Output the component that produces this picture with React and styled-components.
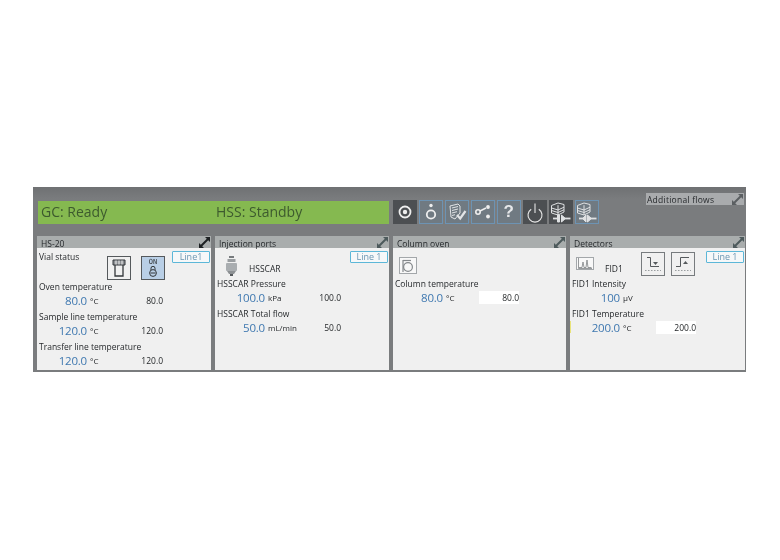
import styled, { createGlobalStyle } from "styled-components";

const GlobalStyle = createGlobalStyle`
  html, body {
    margin: 0;
    padding: 0;
    background: #ffffff;
  }
  body {
    font-family: "Open Sans", "Noto Sans", sans-serif;
    color: #26292c;
  }
`;

function ExpandIcon({ color = "#4d5a5c" }) {
  return (
    <svg width="11" height="11" viewBox="0 0 11 11" fill={color}>
      <path d="M6 0H11V5L9.2 3.2L3.2 9.2L5 11H0V6L1.8 7.8L7.8 1.8Z" />
    </svg>
  );
}

function TargetIcon() {
  return (
    <svg width="18" height="18" viewBox="0 0 18 18" fill="none" stroke="#eeeeee">
      <circle cx="9" cy="9" r="5.5" strokeWidth="1.8" />
      <circle cx="9" cy="9" r="2.2" fill="#eeeeee" stroke="none" />
    </svg>
  );
}

function InjectIcon() {
  return (
    <svg width="18" height="20" viewBox="0 0 18 20" fill="none" stroke="#eeeeee">
      <circle cx="9" cy="3.5" r="1.7" fill="#eeeeee" stroke="none" />
      <circle cx="9" cy="12.5" r="4.2" strokeWidth="1.8" />
    </svg>
  );
}

function BatchIcon() {
  return (
    <svg width="20" height="20" viewBox="0 0 20 20" fill="none" stroke="#e2e4e6" strokeWidth="1">
      <path d="M3 4L11 2L13 4V11L8 17L4 15Z" />
      <path d="M5 6L11 4.5M5 8.5L11 7M5 11L10 9.7M5 13.5L8 12.7" />
      <path d="M10 13L13.2 16.5L18.5 9" strokeWidth="2.2" />
    </svg>
  );
}

function NodesIcon() {
  return (
    <svg width="18" height="16" viewBox="0 0 18 16" fill="#eeeeee" stroke="#eeeeee">
      <circle cx="4" cy="8" r="2.2" fill="none" strokeWidth="1.6" />
      <path d="M6 7L12 4" strokeWidth="1.5" />
      <circle cx="14" cy="3" r="1.9" stroke="none" />
      <circle cx="14" cy="12.5" r="1.9" stroke="none" />
    </svg>
  );
}

function HelpIcon() {
  return <HelpMark>?</HelpMark>;
}

function PowerIcon() {
  return (
    <svg width="20" height="21" viewBox="0 0 20 21" fill="none" stroke="#e8e8e8" strokeWidth="1.1">
      <path d="M6.2 7.2A7 7 0 1 0 13.8 7.2" />
      <path d="M10 1.5V11" />
    </svg>
  );
}

function PlugStackIcon({ open }) {
  return (
    <svg width="21" height="21" viewBox="0 0 21 21" fill="none" stroke="#dfe1e3" strokeWidth="1">
      <path d="M1.5 3.5L8 1L14 2.5V10L8 13L1.5 11Z" />
      <path d="M1.5 6L8 8L14 5.2M1.5 8.5L8 10.5L14 7.7M8 3.2V13" />
      <path d="M3 16.5H7.5" strokeWidth="1.8" />
      <path d={open ? "M10 13V20L6.5 16.5Z" : "M7.5 13V20H9.5V13Z"} fill="#dfe1e3" />
      <path d="M11.5 13V20L15.5 16.5Z" fill="#dfe1e3" />
      <path d="M15 16.5H20.5" strokeWidth="1.8" />
    </svg>
  );
}

function UnplugIcon() {
  return <PlugStackIcon open />;
}

function VialIcon() {
  return (
    <svg width="16" height="18" viewBox="0 0 16 18" fill="none" stroke="#33373a">
      <path d="M2 1H14V6H2Z" fill="#8d9094" />
      <path d="M5 1.5V5.5M8 1.5V5.5M11 1.5V5.5" stroke="#f2f2f2" />
      <path d="M4 6V17H12V6" strokeWidth="1.3" />
    </svg>
  );
}

function LockIcon() {
  return (
    <svg width="12" height="11" viewBox="0 0 12 11" fill="none" stroke="#33373a">
      <path d="M4 4V2.3A2 2 0 0 1 8 2.3V4" />
      <circle cx="6" cy="7" r="3.4" />
      <path d="M3.5 7H8.5" />
    </svg>
  );
}

function InjectorIcon() {
  return (
    <svg width="13" height="20" viewBox="0 0 13 20">
      <rect x="4" y="0" width="5" height="2" fill="#777b7e" />
      <rect x="2.5" y="3" width="8" height="3" fill="#9a9ea1" />
      <rect x="1" y="7" width="11" height="8" rx="1" fill="#a9adb0" />
      <path d="M2 15H11L9 18H4Z" fill="#8c9093" />
      <rect x="5" y="18" width="3" height="2" fill="#55595c" />
    </svg>
  );
}

function OvenIcon() {
  return (
    <svg width="14" height="14" viewBox="0 0 14 14" fill="none" stroke="#85898c" strokeWidth="1.2">
      <path d="M2 1V13" />
      <circle cx="7" cy="8" r="4.4" />
      <path d="M2 1.5H10" />
    </svg>
  );
}

function PeakIcon() {
  return (
    <svg width="14" height="11" viewBox="0 0 14 11" fill="none" stroke="#7d8184" strokeWidth="0.8">
      <path d="M0.5 0V10.5H14" />
      <path d="M1 9.5H4L5 4L6 9.5H8L9 2L10 9.5H13.5" />
    </svg>
  );
}

function StepDownIcon() {
  return (
    <svg width="18" height="16" viewBox="0 0 18 16" fill="none" stroke="#55595c">
      <path d="M3 1.5H6.5V10.5H15" />
      <path d="M9 6H14L11.5 9Z" fill="#55595c" stroke="none" />
      <path d="M1 14.5H17" strokeDasharray="1.5 1.5" stroke="#9a9ea1" />
    </svg>
  );
}

function StepUpIcon() {
  return (
    <svg width="18" height="16" viewBox="0 0 18 16" fill="none" stroke="#55595c">
      <path d="M2 10.5H6.5V1.5H15" />
      <path d="M9 8H14L11.5 5Z" fill="#55595c" stroke="none" />
      <path d="M1 14.5H17" strokeDasharray="1.5 1.5" stroke="#9a9ea1" />
    </svg>
  );
}

const tools = [
  { key: "target", Icon: TargetIcon, dark: true },
  { key: "inject", Icon: InjectIcon },
  { key: "batch", Icon: BatchIcon },
  { key: "nodes", Icon: NodesIcon },
  { key: "help", Icon: HelpIcon },
  { key: "power", Icon: PowerIcon, dark: true },
  { key: "plug", Icon: PlugStackIcon, dark: true },
  { key: "unplug", Icon: UnplugIcon },
];

function Reading({ value, unit, setpoint, editable, warn }) {
  return (
    <ValueRow>
      <Value $warn={warn}>{value}</Value>
      <Unit>{unit}</Unit>
      <Setpoint $editable={editable}>{setpoint}</Setpoint>
    </ValueRow>
  );
}

export default function App() {
  return (
    <>
      <GlobalStyle />
      <Console>
        <TopBar>
          <StatusBar>
            <StatusText $width={175}>GC: Ready</StatusText>
            <StatusText>HSS: Standby</StatusText>
          </StatusBar>
          <ToolBar>
            {tools.map(({ key, Icon, dark }) => (
              <BarButton key={key} $dark={dark}>
                <Icon />
              </BarButton>
            ))}
          </ToolBar>
          <FlowsTab>
            Additional flows
            <ExpandIcon color="#5b5f62" />
          </FlowsTab>
        </TopBar>
        <Panels>
          <Panel>
            <PanelHead>
              <span>HS-20</span>
              <ExpandIcon color="#1d2123" />
            </PanelHead>
            <TopRow $height={33}>
              <Caption $width={70} $top={3}>Vial status</Caption>
              <ToolButton>
                <VialIcon />
              </ToolButton>
              <ToolButton $active $gap={10}>
                <OnMark>ON</OnMark>
                <LockIcon />
              </ToolButton>
              <LineBadge>Line1</LineBadge>
            </TopRow>
            <Group>
              <Label>Oven temperature</Label>
              <Reading value="80.0" unit="°C" setpoint="80.0" />
            </Group>
            <Group>
              <Label>Sample line temperature</Label>
              <Reading value="120.0" unit="°C" setpoint="120.0" />
            </Group>
            <Group>
              <Label>Transfer line temperature</Label>
              <Reading value="120.0" unit="°C" setpoint="120.0" />
            </Group>
          </Panel>

          <Panel>
            <PanelHead>
              <span>Injection ports</span>
              <ExpandIcon />
            </PanelHead>
            <TopRow $height={30}>
              <IconSlot $left={10} $width={22}>
                <InjectorIcon />
              </IconSlot>
              <Caption $top={15}>HSSCAR</Caption>
              <LineBadge>Line 1</LineBadge>
            </TopRow>
            <Group>
              <Label>HSSCAR Pressure</Label>
              <Reading value="100.0" unit="kPa" setpoint="100.0" />
            </Group>
            <Group>
              <Label>HSSCAR Total flow</Label>
              <Reading value="50.0" unit="mL/min" setpoint="50.0" />
            </Group>
          </Panel>

          <Panel>
            <PanelHead>
              <span>Column oven</span>
              <ExpandIcon />
            </PanelHead>
            <TopRow $height={30}>
              <IconSlot $left={6} $boxed>
                <OvenIcon />
              </IconSlot>
            </TopRow>
            <Group>
              <Label>Column temperature</Label>
              <Reading value="80.0" unit="°C" setpoint="80.0" editable />
            </Group>
          </Panel>

          <Panel>
            <PanelHead>
              <span>Detectors</span>
              <ExpandIcon />
            </PanelHead>
            <TopRow $height={30}>
              <IconSlot $left={6} $boxed $short>
                <PeakIcon />
              </IconSlot>
              <Caption $width={47} $top={15} $left={11}>FID1</Caption>
              <ToolButton $raised>
                <StepDownIcon />
              </ToolButton>
              <ToolButton $raised $gap={6}>
                <StepUpIcon />
              </ToolButton>
              <LineBadge>Line 1</LineBadge>
            </TopRow>
            <Group>
              <Label>FID1 Intensity</Label>
              <Reading value="100" unit="µV" />
            </Group>
            <Group>
              <Label>FID1 Temperature</Label>
              <Reading value="200.0" unit="°C" setpoint="200.0" editable warn />
            </Group>
          </Panel>
        </Panels>
      </Console>
    </>
  );
}

const Console = styled.div`
  width: 713px;
  height: 185px;
  margin: 187px 0 0 33px;
  background: linear-gradient(#6f7173, #7a7c7e 12px);
  box-sizing: border-box;
  filter: blur(0.3px);
`;
const TopBar = styled.div`
  display: flex;
  align-items: flex-start;
  height: 49px;
  padding: 0 2px 0 5px;
  box-sizing: border-box;
`;
const StatusBar = styled.div`
  display: flex;
  align-items: center;
  width: 351px;
  height: 23px;
  margin-top: 14px;
  padding: 0 0 2px 3px;
  box-sizing: border-box;
  background: #85b950;
`;
const StatusText = styled.span`
  width: ${(props) => (props.$width ? `${props.$width}px` : "auto")};
  font-size: 14px;
  color: #3d5a2e;
  white-space: nowrap;
`;
const ToolBar = styled.div`
  display: flex;
  gap: 2.5px;
  margin: 13px 0 0 4px;
`;
const BarButton = styled.div`
  display: flex;
  align-items: center;
  justify-content: center;
  width: 23.5px;
  height: 24px;
  box-sizing: border-box;
  background: ${(props) => (props.$dark ? "#4c4f52" : "#707a82")};
  border: 1px solid ${(props) => (props.$dark ? "#4c4f52" : "#6d93b3")};
`;
const HelpMark = styled.span`
  font-family: "Liberation Sans", sans-serif;
  font-size: 17px;
  font-weight: 700;
  color: #e6e8ea;
`;
const FlowsTab = styled.div`
  display: flex;
  align-items: center;
  justify-content: space-between;
  width: 98px;
  height: 12px;
  margin: 6px 0 0 auto;
  padding: 0 1px;
  box-sizing: border-box;
  background: #a9abad;
  font-size: 8.5px;
  letter-spacing: 0.25px;
  color: #26292c;
`;
const Panels = styled.div`
  display: grid;
  grid-template-columns: 174px 174px 173px 175px;
  gap: 4px;
  height: 134px;
  padding-left: 4px;
`;
const Panel = styled.section`
  background: #f0f0f0;
  overflow: hidden;
`;
const PanelHead = styled.header`
  display: flex;
  align-items: center;
  justify-content: space-between;
  height: 12px;
  padding: 0 1px 0 4px;
  background: #a9adad;
  font-size: 8.5px;
  color: #26292c;
  span {
    padding-top: 2px;
  }
`;
const TopRow = styled.div`
  display: flex;
  align-items: flex-start;
  height: ${(props) => props.$height}px;
`;
const Caption = styled.span`
  flex: none;
  box-sizing: border-box;
  width: ${(props) => (props.$width ? `${props.$width}px` : "auto")};
  margin-top: ${(props) => props.$top}px;
  padding-left: ${(props) => props.$left ?? 2}px;
  font-size: 8.5px;
  line-height: 12px;
`;
const ToolButton = styled.div`
  flex: none;
  display: flex;
  flex-direction: column;
  align-items: center;
  justify-content: center;
  box-sizing: border-box;
  width: 24px;
  height: 24px;
  margin-top: ${(props) => (props.$raised ? 4 : 8)}px;
  margin-left: ${(props) => props.$gap ?? 0}px;
  background: ${(props) => (props.$active ? "#b9cfe6" : "#f0f0f0")};
  border: 1px solid ${(props) => (props.$raised ? "#777b7e" : "#55595c")};
`;
const OnMark = styled.span`
  font-family: "DejaVu Sans Mono", monospace;
  font-size: 7px;
  line-height: 7px;
  color: #33373a;
`;
const IconSlot = styled.div`
  flex: none;
  display: flex;
  align-items: center;
  justify-content: ${(props) => (props.$boxed ? "center" : "flex-start")};
  box-sizing: border-box;
  width: ${(props) => (props.$boxed ? "18px" : `${props.$width}px`)};
  height: ${(props) => (props.$boxed ? (props.$short ? "13px" : "17px") : "20px")};
  margin: ${(props) => (props.$boxed ? "9px" : "8px")} 0 0 ${(props) => props.$left}px;
  border: ${(props) => (props.$boxed ? "1px solid #a3a7aa" : "none")};
  background: ${(props) => (props.$boxed ? "#f8f8f8" : "transparent")};
`;
const LineBadge = styled.div`
  flex: none;
  box-sizing: border-box;
  width: 38px;
  height: 12px;
  margin: 3px 1px 0 auto;
  border: 1px solid #5cb7d8;
  border-radius: 1px;
  background: #f6f8f9;
  text-align: center;
  font-size: 9px;
  line-height: 10px;
  color: #6c96b2;
`;
const Group = styled.div`
  height: 30px;
`;
const Label = styled.div`
  height: 12px;
  padding-left: 2px;
  font-size: 8.5px;
  line-height: 12px;
  white-space: nowrap;
`;
const ValueRow = styled.div`
  position: relative;
  display: grid;
  grid-template-columns: 50px 36px 40px;
  align-items: center;
  height: 14px;
`;
const Value = styled.span`
  text-align: right;
  font-size: 11.5px;
  letter-spacing: -0.2px;
  color: #3f78b0;
  &::before {
    content: "";
    display: ${(props) => (props.$warn ? "block" : "none")};
    position: absolute;
    left: 0;
    top: 1px;
    width: 1px;
    height: 12px;
    background: #e9e37a;
  }
`;
const Unit = styled.span`
  padding-left: 3px;
  font-size: 8px;
  color: #26292c;
`;
const Setpoint = styled.span`
  height: 13px;
  background: ${(props) => (props.$editable ? "#ffffff" : "transparent")};
  text-align: right;
  font-size: 8.5px;
  line-height: 13px;
  color: #1f2224;
`;
